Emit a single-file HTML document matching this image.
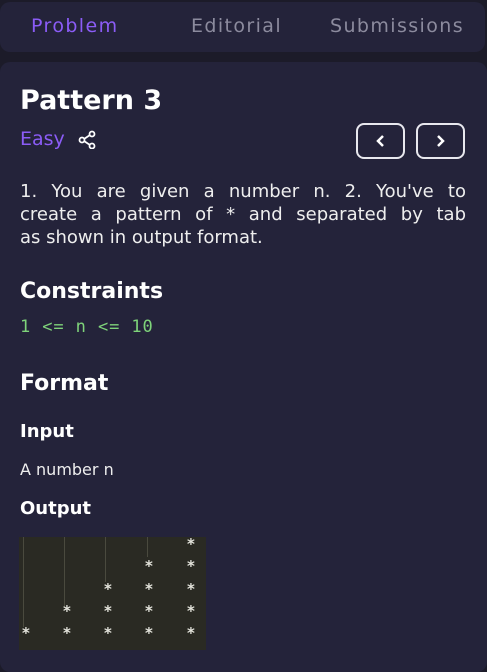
<!DOCTYPE html>
<html><head><style>
body{margin:0;width:487px;height:660px;background:#1c1b29;overflow:hidden;font-family:"DejaVu Sans",sans-serif;}
.tabs{position:absolute;left:0;top:2px;width:485px;height:50px;background:#24233a;border-radius:10px;}
.tab{position:absolute;top:13px;font-size:19px;letter-spacing:1.4px;color:#8c8b9e;}
.card{position:absolute;left:0;top:62px;width:487px;height:610px;background:#24233a;border-radius:10px;}
.t{position:absolute;left:20px;color:#fff;}
.btn{position:absolute;top:123px;width:49px;height:36px;border:2px solid #e8e8ee;border-radius:8px;box-sizing:border-box;}
.img{position:absolute;left:19px;top:537px;width:187px;height:113px;background:#2a2a23;}
.s{position:absolute;color:#e4e4dc;font-size:15px;font-weight:bold;}
.l{position:absolute;width:1px;background:#4a4a3e;top:0;}
.j{width:446px;font-size:18px;line-height:23px;color:#eee;text-align:justify;text-align-last:justify;white-space:nowrap;}
</style></head><body>
<div class="tabs">
<div class="tab" style="left:31px;color:#8b5cf6">Problem</div>
<div class="tab" style="left:191px">Editorial</div>
<div class="tab" style="left:330px">Submissions</div>
</div>
<div class="card"></div>
<div class="t" style="top:85px;font-size:27px;font-weight:bold">Pattern 3</div>
<div class="t" style="top:128px;font-size:19px;color:#8b5cf6">Easy</div>
<svg style="position:absolute;left:78px;top:130px" width="19" height="19" viewBox="0 0 19 19" fill="none" stroke="#fff" stroke-width="1.8"><circle cx="14" cy="4" r="2.5"/><circle cx="4" cy="10" r="2.5"/><circle cx="14" cy="16" r="2.5"/><path d="M6 9L12 5M6 11L12 15"/></svg>
<div class="btn" style="left:356px"><svg width="45" height="32" viewBox="0 0 45 32"><path d="M25 11L20 16L25 21" stroke="#fff" stroke-width="2.5" fill="none"/></svg></div>
<div class="btn" style="left:416px"><svg width="45" height="32" viewBox="0 0 45 32"><path d="M20 11L25 16L20 21" stroke="#fff" stroke-width="2.5" fill="none"/></svg></div>
<div class="t" style="top:180px">
<div class="j">1. You are given a number n. 2. You've to</div>
<div class="j">create a pattern of * and separated by tab</div>
<div class="j" style="text-align-last:left">as shown in output format.</div>
</div>
<div class="t" style="top:279px;font-size:22px;font-weight:bold">Constraints</div>
<div class="t" style="top:317px;font-family:'DejaVu Sans Mono',monospace;font-size:17px;letter-spacing:0.9px;color:#7ed37a">1 &lt;= n &lt;= 10</div>
<div class="t" style="top:371px;font-size:22px;font-weight:bold">Format</div>
<div class="t" style="top:421px;font-size:18px;font-weight:bold">Input</div>
<div class="t" style="top:460px;font-size:16px;color:#eee">A number n</div>
<div class="t" style="top:498px;font-size:18px;font-weight:bold">Output</div>
<div class="img">
<div class="l" style="left:4px;height:90px"></div>
<div class="l" style="left:45px;height:70px"></div>
<div class="l" style="left:86px;height:45px"></div>
<div class="l" style="left:128px;height:20px"></div>
<div class="s" style="left:3px;top:87px">*</div>
<div class="s" style="left:44px;top:65px">*</div><div class="s" style="left:44px;top:87px">*</div>
<div class="s" style="left:85px;top:43px">*</div><div class="s" style="left:85px;top:65px">*</div><div class="s" style="left:85px;top:87px">*</div>
<div class="s" style="left:126px;top:20px">*</div><div class="s" style="left:126px;top:43px">*</div><div class="s" style="left:126px;top:65px">*</div><div class="s" style="left:126px;top:87px">*</div>
<div class="s" style="left:168px;top:-2px">*</div><div class="s" style="left:168px;top:20px">*</div><div class="s" style="left:168px;top:43px">*</div><div class="s" style="left:168px;top:65px">*</div><div class="s" style="left:168px;top:87px">*</div>
</div>
</body></html>
